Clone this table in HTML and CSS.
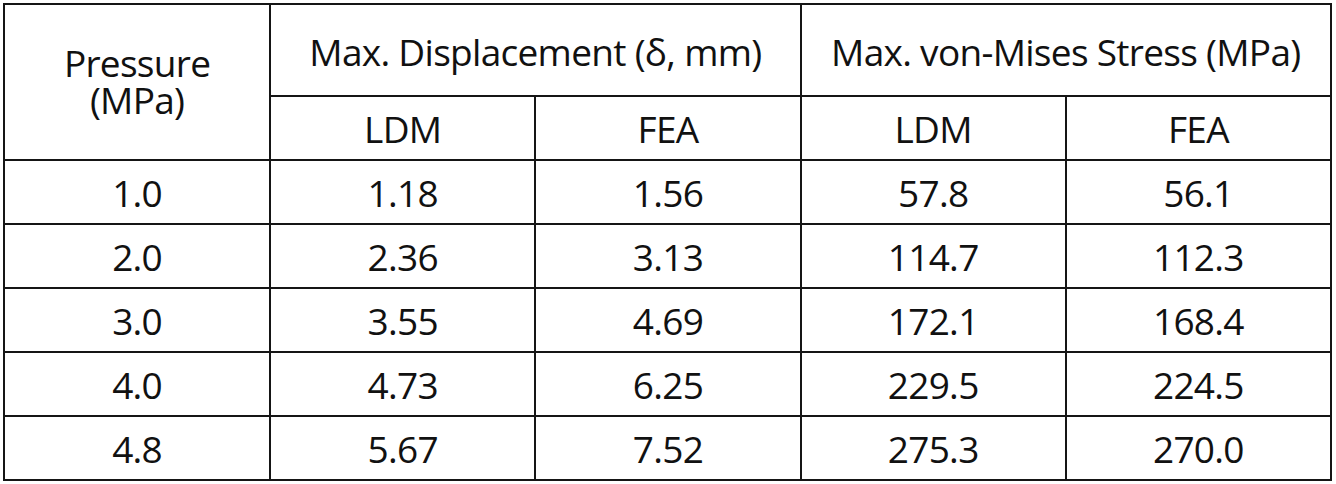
FILE: index.html
```html
<!DOCTYPE html>
<html lang="en">
<head>
<meta charset="utf-8">
<link rel="stylesheet" href="styles.css">
<title>Table</title>
</head>
<body>
<table class="results">
  <colgroup>
    <col class="c1"><col class="c2"><col class="c3"><col class="c4"><col class="c5">
  </colgroup>
  <thead>
    <tr class="h1">
      <th rowspan="2" class="pressure"><span class="ln">Pressure</span><span class="ln">(MPa)</span></th>
      <th colspan="2">Max. Displacement (δ, mm)</th>
      <th colspan="2">Max. von-Mises Stress (MPa)</th>
    </tr>
    <tr class="h2">
      <th>LDM</th><th>FEA</th><th>LDM</th><th>FEA</th>
    </tr>
  </thead>
  <tbody>
    <tr><td>1.0</td><td>1.18</td><td>1.56</td><td>57.8</td><td>56.1</td></tr>
    <tr><td>2.0</td><td>2.36</td><td>3.13</td><td>114.7</td><td>112.3</td></tr>
    <tr><td>3.0</td><td>3.55</td><td>4.69</td><td>172.1</td><td>168.4</td></tr>
    <tr><td>4.0</td><td>4.73</td><td>6.25</td><td>229.5</td><td>224.5</td></tr>
    <tr><td>4.8</td><td>5.67</td><td>7.52</td><td>275.3</td><td>270.0</td></tr>
  </tbody>
</table>
</body>
</html>
```
FILE: styles.css
```css
html, body {
  margin: 0;
  padding: 0;
  background: #ffffff;
}
body {
  padding: 3px 0 0 3px;
  font-family: "Open Sans", "Noto Sans", sans-serif;
  color: #111111;
}
.results {
  border-collapse: collapse;
  table-layout: fixed;
  width: 1329px;
}
.results col { width: 265px; }
.results .c1 { width: 266px; }
.results th,
.results td {
  border: 2px solid #151515;
  padding: 0;
  text-align: center;
  vertical-align: middle;
  font-weight: 400;
  font-size: 37px;
  line-height: 37px;
  letter-spacing: -0.7px;
}
.results .h1 { height: 92px; }
.results .h1 th { padding-top: 3px; }
.results .h2 { height: 64px; }
.results tbody tr { height: 64px; }
.results .pressure { padding-bottom: 6px; }
.results .pressure .ln {
  display: block;
  line-height: 37px;
}
```
